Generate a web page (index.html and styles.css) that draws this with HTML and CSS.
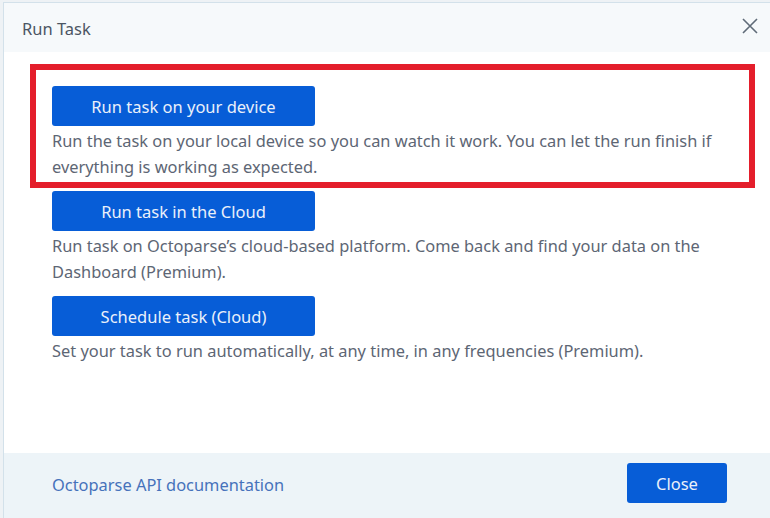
FILE: index.html
```html
<!DOCTYPE html>
<html lang="en">
<head>
<meta charset="utf-8">
<title>Run Task</title>
<link rel="stylesheet" href="styles.css">
</head>
<body>
<div class="dialog">
  <div class="header">
    <span class="title">Run Task</span>
    <button class="close-x" aria-label="Close">
      <svg width="16" height="16" viewBox="0 0 16 16"><path d="M1 1 L15 15 M15 1 L1 15" stroke="#5f6b78" stroke-width="1.6" fill="none"/></svg>
    </button>
  </div>
  <div class="content">
    <div class="option highlighted">
      <button class="btn">Run task on your device</button>
      <p class="desc">Run the task on your local device so you can watch it work. You can let the run finish if<br>everything is working as expected.</p>
    </div>
    <div class="option">
      <button class="btn">Run task in the Cloud</button>
      <p class="desc">Run task on Octoparse’s cloud-based platform. Come back and find your data on the<br>Dashboard (Premium).</p>
    </div>
    <div class="option">
      <button class="btn">Schedule task (Cloud)</button>
      <p class="desc">Set your task to run automatically, at any time, in any frequencies (Premium).</p>
    </div>
  </div>
  <div class="footer">
    <a class="doc-link" href="#">Octoparse API documentation</a>
    <button class="btn btn-close">Close</button>
  </div>
</div>
</body>
</html>
```

FILE: styles.css
```css
* { box-sizing: border-box; }
html, body { margin: 0; padding: 0; }
body {
  width: 770px;
  height: 518px;
  overflow: hidden;
  background: #eef2f5;
  font-family: "Noto Sans", "Open Sans", sans-serif;
}
.dialog {
  margin: 2px 0 0 3px;
  width: 767px;
  height: 516px;
  background: #ffffff;
  border-top: 1px solid #d3e1ea;
  border-left: 1px solid #d3e1ea;
  display: flex;
  flex-direction: column;
}
.header {
  height: 49px;
  flex: none;
  background: #f6f9fb;
  display: flex;
  align-items: center;
  justify-content: space-between;
  padding: 0 12px 0 18px;
}
.title {
  font-size: 16.5px;
  color: #4b5563;
  margin-top: 2px;
}
.close-x {
  border: 0;
  background: none;
  padding: 0;
  width: 16px;
  height: 16px;
  display: flex;
  margin-top: -3px;
}
.content {
  flex: 1;
  padding: 34px 20px 0 48px;
  display: flex;
  flex-direction: column;
  gap: 11px;
}
.option { position: relative; }
.highlighted::before {
  content: "";
  position: absolute;
  left: -22px;
  top: -22px;
  right: -5px;
  bottom: -8px;
  border: 6px solid #e41e2b;
  pointer-events: none;
}
.btn {
  display: block;
  width: 263px;
  height: 40px;
  border: 0;
  border-radius: 3px;
  background: #075dd7;
  color: #eaf0fa;
  font-family: inherit;
  font-size: 16.5px;
  padding: 0;
  cursor: pointer;
}
.desc {
  margin: 2px 0 0;
  font-size: 16.4px;
  line-height: 26px;
  color: #5d6674;
}
.footer {
  height: 65px;
  flex: none;
  background: #edf4f8;
  display: flex;
  align-items: center;
  justify-content: space-between;
  padding: 0 43px 5px 48px;
}
.doc-link {
  font-size: 16.4px;
  color: #4672bb;
  text-decoration: none;
  margin-top: 2px;
}
.btn-close {
  width: 100px;
}
```
